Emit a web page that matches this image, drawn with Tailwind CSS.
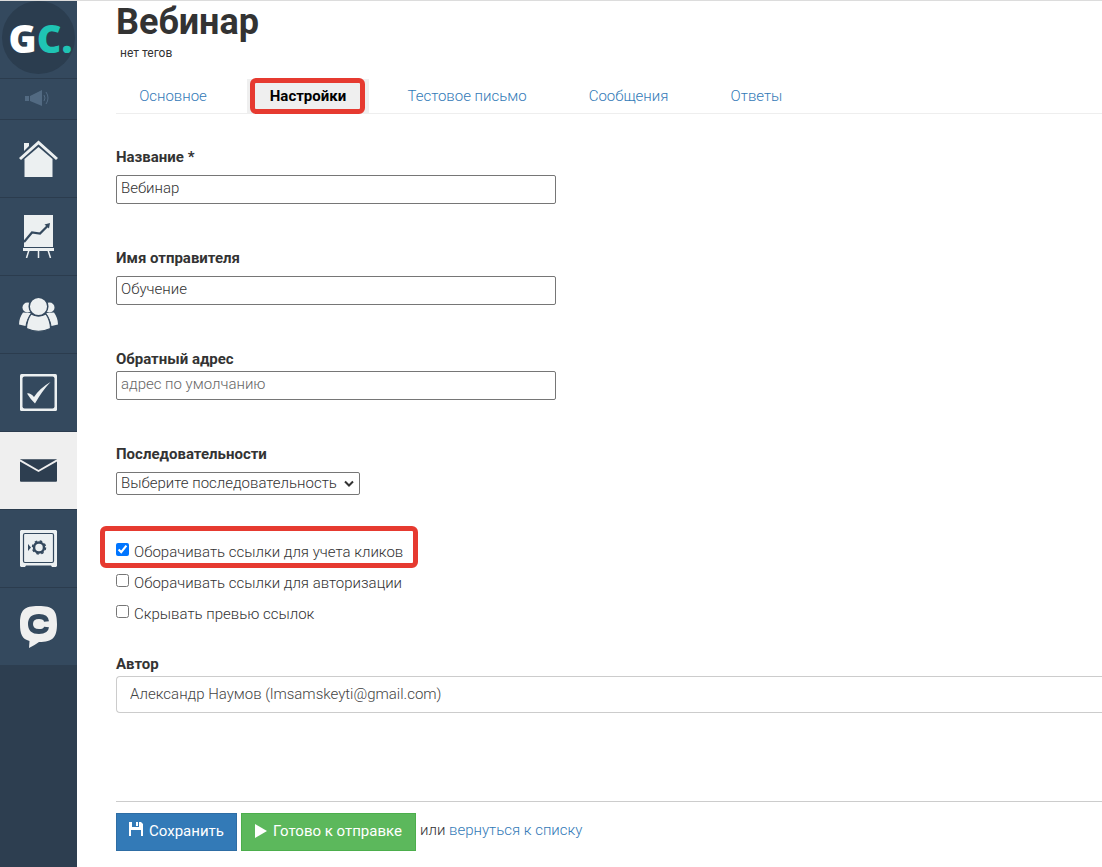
<!DOCTYPE html>
<html lang="ru">
<head>
    <meta charset="UTF-8">
    <meta name="viewport" content="width=device-width, initial-scale=1.0">
    <title>Вебинар</title>
    <script src="https://cdn.jsdelivr.net/npm/@tailwindcss/browser@4"></script>
</head>
<body class="bg-white font-['Roboto','Liberation_Sans',sans-serif] text-[15px] leading-5 font-light text-[#333]">

<div class="flex min-h-screen border-t border-[#dcdcdc]">

    <!-- Боковое меню -->
    <nav class="w-[77px] shrink-0 bg-[#2d3e50]" aria-label="Меню">
        <a href="#" class="flex h-[78px] items-center justify-center border-b border-[#2b3c4e] bg-[#34495e] pb-1">
            <span class="flex size-[73px] items-center justify-center rounded-full bg-[#2b3d4f] pl-1 font-['Open_Sans',sans-serif] text-[38px] leading-none font-extrabold text-white">G<span class="text-[#1fc4b4]">C.</span></span>
        </a>
        <a href="#" class="flex h-[41px] items-center justify-center border-b border-[#2b3c4e] bg-[#34495e] pr-1 pb-0.5" aria-label="Уведомления">
            <svg class="h-4 w-6" viewBox="0 0 24 16" fill="#526a82">
                <rect x="0" y="6" width="4" height="5"/>
                <path d="M5 6L17 0V16L5 11Z"/>
                <path d="M19 5Q21 8 19 11M21 2Q25 8 21 14" fill="none" stroke="#526a82"/>
            </svg>
        </a>
        <a href="#" class="flex h-[78px] items-center justify-center border-b border-[#2b3c4e] bg-[#34495e]" aria-label="Главная">
            <svg class="h-[39px] w-[41px]" viewBox="0 0 41 39" fill="#ecf0f1">
                <path d="M6 4h5v3l-5 5z"/>
                <path d="M2 20L20.500 3.500L39 20" fill="none" stroke="#ecf0f1" stroke-width="3"/>
                <path d="M6.500 20L20.500 8L34.500 20V38H6.500Z"/>
            </svg>
        </a>
        <a href="#" class="flex h-[78px] items-center justify-center border-b border-[#2b3c4e] bg-[#34495e]" aria-label="Трафик">
            <svg class="h-[43px] w-[31px]" viewBox="0 0 31 43" fill="#ecf0f1">
                <path d="M1 0h29v32H1z"/>
                <path d="M0 33h31v3H0z"/>
                <path d="M6 35L3.500 43M15.500 35V43M25 35L27.500 43" fill="none" stroke="#ecf0f1" stroke-width="1.500"/>
                <path d="M1 27L9 17.500L17 18.500L25 10.500" fill="none" stroke="#34495e" stroke-width="2.200"/>
                <path d="M21.500 9.500L27 8L26 13.500Z" fill="#34495e"/>
            </svg>
        </a>
        <a href="#" class="flex h-[78px] items-center justify-center border-b border-[#2b3c4e] bg-[#34495e]" aria-label="Пользователи">
            <svg class="h-[35px] w-[39px]" viewBox="0 0 39 35" fill="#ecf0f1">
                <circle cx="8.500" cy="10.500" r="5"/>
                <circle cx="30.500" cy="10.500" r="5"/>
                <path d="M4 15.500Q0 21 0 27.500L6.500 29Q7.500 22 12 16ZM35 15.500Q39 21 39 27.500L32.500 29Q31.500 22 27 16Z"/>
                <path d="M12 17Q19.500 21 27 17Q31.500 24 31.500 31.500Q19.500 37 7.500 31.500Q7.500 24 12 17Z" stroke="#34495e" stroke-width="1.200"/>
                <circle cx="19.500" cy="9.500" r="9.300" stroke="#34495e" stroke-width="1.500"/>
            </svg>
        </a>
        <a href="#" class="flex h-[78px] items-center justify-center border-b border-[#2b3c4e] bg-[#34495e]" aria-label="Задачи">
            <svg class="size-[37px]" viewBox="0 0 37 37">
                <rect width="37" height="37" rx="1.500" fill="#ecf0f1"/>
                <rect x="2.500" y="2.500" width="32" height="32" rx="2" fill="#34495e"/>
                <path d="M7 19.500Q10 18.500 14 23Q20 14 30.500 8Q22 17 15 29.500Q11 26 7 19.500Z" fill="#ecf0f1"/>
            </svg>
        </a>
        <a href="#" class="flex h-[77px] items-center justify-center bg-[#efefef]" aria-label="Сообщения" aria-current="page">
            <svg class="h-[23px] w-[37px]" viewBox="0 0 38 23">
                <rect width="38" height="23" rx="1" fill="#2d3e50"/>
                <path d="M0 1L19 12L38 1" fill="none" stroke="#efefef" stroke-width="2"/>
            </svg>
        </a>
        <a href="#" class="flex h-[79px] items-center justify-center border-y border-[#2b3c4e] bg-[#34495e]" aria-label="Финансы">
            <svg class="h-[37px] w-[37px]" viewBox="0 0 37 37">
                <path d="M1 0H36L37 1V36L36 37H32L31 35.500H6L5 37H1L0 36V1Z" fill="#ecf0f1"/>
                <rect x="3.500" y="3.500" width="30" height="29" rx="1.500" fill="none" stroke="#34495e" stroke-width="1.200"/>
                <path d="M8 14L11 17.500L8 21Z" fill="#34495e"/>
                <circle cx="19" cy="17.500" r="5" fill="none" stroke="#34495e" stroke-width="2.500"/>
                <circle cx="19" cy="17.500" r="6.500" fill="none" stroke="#34495e" stroke-width="1.500" stroke-dasharray="2.500 2.600"/>
            </svg>
        </a>
        <a href="#" class="flex h-[77px] items-center justify-center bg-[#34495e]" aria-label="Чатиум">
            <svg class="h-[42px] w-[37px]" viewBox="0 0 37 42">
                <path d="M18.500 0C33 0 37 4 37 18C37 31 33 36 19 36Q15 39 9 42L9.500 35C2 33 0 28 0 18C0 4 4 0 18.500 0Z" fill="#efefef"/>
                <path d="M26.500 15.500Q26 10.500 19 10.500Q10.500 10.500 10.500 18Q10.500 25.500 19 25.500Q26 25.500 26.500 21" fill="none" stroke="#34495e" stroke-width="5"/>
            </svg>
        </a>
    </nav>

    <main class="min-w-0 grow pl-[39px]">
        <h1 class="text-[36px] leading-[42px] font-bold">Вебинар</h1>
        <p class="px-1 text-xs leading-5 font-normal">нет тегов</p>

        <!-- Вкладки -->
        <div class="mt-4 flex gap-[17px] border-b border-[#eee] text-center leading-[34px]">
            <a href="#" class="w-[114px] text-[#337ab7]">Основное</a>
            <a href="#" class="relative w-[122px] bg-[#efefef] font-bold text-black" aria-current="page">Настройки
                <span class="absolute -top-px right-1 left-[3px] h-9 rounded-md border-5 border-[#e63a30]"></span>
            </a>
            <a href="#" class="w-[162px] text-[#337ab7]">Тестовое письмо</a>
            <a href="#" class="w-[127px] text-[#337ab7]">Сообщения</a>
            <a href="#" class="w-[95px] text-[#337ab7]">Ответы</a>
        </div>

        <form class="pt-8">
            <label for="name" class="block pt-px font-bold">Название *</label>
            <input type="text" id="name" name="name" value="Вебинар" class="mt-2 block h-[29px] w-[440px] rounded-xs border border-[#767676] px-1 pb-1">

            <label for="sender" class="mt-11 block font-bold">Имя отправителя</label>
            <input type="text" id="sender" name="sender" value="Обучение" class="mt-2 block h-[29px] w-[440px] rounded-xs border border-[#767676] px-1 pb-1">

            <label for="reply" class="mt-11 block font-bold">Обратный адрес</label>
            <input type="text" id="reply" name="reply" placeholder="адрес по умолчанию" class="mt-0.5 block h-[29px] w-[440px] rounded-xs border border-[#767676] px-1 pb-1 placeholder:text-[#666]">

            <label for="sequence" class="mt-11 block font-bold">Последовательности</label>
            <div class="relative mt-2 w-[244px]">
                <select id="sequence" name="sequence" class="block h-[23px] w-full appearance-none rounded-xs border border-[#767676] pb-px pl-1">
                    <option>Выберите последовательность</option>
                </select>
                <svg class="pointer-events-none absolute top-2 right-1.5 h-2 w-2.5" viewBox="0 0 10 8" fill="none" stroke="#333" stroke-width="2"><path d="M1 1.500L5 5.500L9 1.500"/></svg>
            </div>

            <div class="relative mt-[41px] flex flex-col">
                <label class="flex h-[31px] items-center gap-[5px]"><input type="checkbox" name="wrap_clicks" checked class="mb-1 size-[13px] accent-[#0075ff]">Оборачивать ссылки для учета кликов</label>
                <label class="flex h-[31px] items-center gap-[5px]"><input type="checkbox" name="wrap_auth" class="mb-1 size-[13px]">Оборачивать ссылки для авторизации</label>
                <label class="flex h-[31px] items-center gap-[5px]"><input type="checkbox" name="hide_preview" class="mb-1 size-[13px]">Скрывать превью ссылок</label>
                <span class="pointer-events-none absolute -top-2.5 -left-4 h-[42px] w-[318px] rounded-md border-5 border-[#e63a30]"></span>
            </div>

            <label for="author" class="mt-[25px] block font-bold">Автор</label>
            <select id="author" name="author" class="mt-0.5 block h-[37px] w-full appearance-none rounded-l border border-r-0 border-[#ccc] pb-0.5 pl-[13px] text-[#444]">
                <option>Александр Наумов (lmsamskeyti@gmail.com)</option>
            </select>

            <!-- Кнопки -->
            <div class="mt-[88px] flex items-center gap-1 border-t border-[#ccc] pt-[11px]">
                <button type="submit" class="flex h-[38px] w-[121px] items-center justify-center gap-1.5 border border-[#2e6da4] bg-[#337ab7] pb-0.5 font-normal text-white">
                    <svg class="mb-1 size-[14px]" viewBox="0 0 14 14" fill="#fff"><path d="M0 0H3V5H10V0H12L14 2V14H12V8H2V14H0ZM7 0H9V4H7Z"/></svg>
                    Сохранить
                </button>
                <button type="button" class="flex h-[38px] w-[175px] items-center justify-center gap-1.5 border border-[#4cae4c] bg-[#5cb85c] pb-0.5 font-normal text-white">
                    <svg class="h-[14px] w-3" viewBox="0 0 12 14" fill="#fff"><path d="M0 0L12 7L0 14Z"/></svg>
                    Готово к отправке
                </button>
                <span class="pb-1">или <a href="#" class="text-[#337ab7]">вернуться к списку</a></span>
            </div>
        </form>
    </main>
</div>

</body>
</html>
